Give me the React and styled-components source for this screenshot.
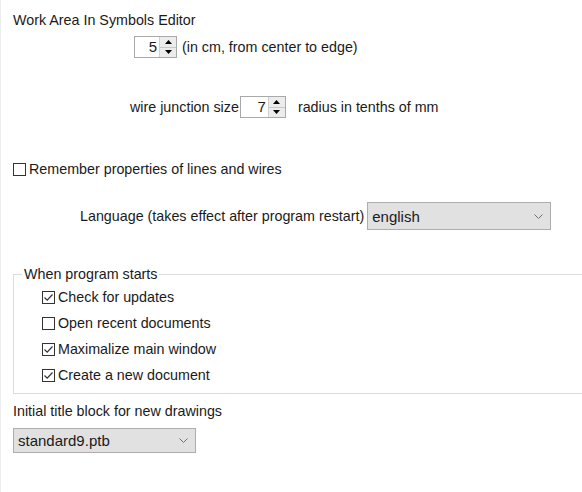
import styled, { createGlobalStyle } from "styled-components";

const GlobalStyle = createGlobalStyle`
    html, body {
        margin: 0;
        padding: 0;
        background: #ffffff;
    }
    body {
        font-family: "Liberation Sans", Arial, sans-serif;
        font-size: 14.3px;
        color: #000000;
    }
`;

/*Icons ------------*/
const CheckMark = () => (
    <svg width="11" height="11" viewBox="0 0 11 11">
        <path d="M1.5 5.5 L4.2 8.2 L9.5 2.5" fill="none" stroke="#333" strokeWidth="1.2" />
    </svg>
);

const Chevron = () => (
    <svg width="9" height="5" viewBox="0 0 9 5">
        <path d="M0.5 0.5 L4.5 4.5 L8.5 0.5" fill="none" stroke="#707070" strokeWidth="1" />
    </svg>
);

const Arrow = ({ down }) => (
    <svg width="7" height="4" viewBox="0 0 7 4">
        <path d={down ? "M0 0 L7 0 L3.5 4 Z" : "M0 4 L7 4 L3.5 0 Z"} fill="#000" />
    </svg>
);

/*Components ------------*/
const Spinner = ({ value, width }) => (
    <SpinBox $width={width}>
        <SpinValue>{value}</SpinValue>
        <SpinButtons>
            <SpinButton><Arrow /></SpinButton>
            <SpinButton $bottom><Arrow down /></SpinButton>
        </SpinButtons>
    </SpinBox>
);

const Check = ({ checked, children }) => (
    <CheckRow>
        <CheckBox>{checked && <CheckMark />}</CheckBox>
        <span>{children}</span>
    </CheckRow>
);

const App = () => {
    return (
        <>
            <GlobalStyle />
            <Page>
                <Heading>Work Area In Symbols Editor</Heading>
                <InlineRow $indent={134} $top={7}>
                    <Spinner value="5" width={43} />
                    <Label $gap={5}>(in cm, from center to edge)</Label>
                </InlineRow>
                <InlineRow $indent={130} $top={38}>
                    <Label>wire junction size</Label>
                    <Spacer $w={1} />
                    <Spinner value="7" width={46} />
                    <Label $gap={12}>radius in tenths of mm</Label>
                </InlineRow>
                <TopCheck>
                    <Check>Remember properties of lines and wires</Check>
                </TopCheck>
                <InlineRow $indent={80} $top={20}>
                    <Label>Language (takes effect after program restart)</Label>
                    <Select $width={184} $height={28} $gap={3}>
                        <span>english</span>
                        <Chevron />
                    </Select>
                </InlineRow>
                <Group>
                    <Legend>When program starts</Legend>
                    <Check checked>Check for updates</Check>
                    <Check>Open recent documents</Check>
                    <Check checked>Maximalize main window</Check>
                    <Check checked>Create a new document</Check>
                </Group>
                <BlockLabel>Initial title block for new drawings</BlockLabel>
                <Select $width={183} $height={25}>
                    <span>standard9.ptb</span>
                    <Chevron />
                </Select>
            </Page>
        </>
    );
};

export default App;

const Page = styled.div`
    width: 582px;
    height: 492px;
    box-sizing: border-box;
    padding: 12px 0 0 12px;
    border-left: 1px solid #ededed;
    overflow: hidden;
    color: #1a1a1a;
`;

const Heading = styled.div`
    line-height: 17px;
    height: 17px;
`;

const InlineRow = styled.div`
    display: flex;
    align-items: center;
    margin-left: ${(p) => p.$indent - 13}px;
    margin-top: ${(p) => p.$top}px;
`;

const Label = styled.span`
    margin-left: ${(p) => p.$gap || 0}px;
    white-space: nowrap;
`;

const Spacer = styled.span`
    width: ${(p) => p.$w}px;
`;

const SpinBox = styled.div`
    display: flex;
    width: ${(p) => p.$width}px;
    height: 22px;
    box-sizing: border-box;
    border: 1px solid #a9a9a9;
    background: #ffffff;
`;

const SpinValue = styled.div`
    flex: 1;
    text-align: right;
    padding-right: 2px;
    font-size: 15px;
    line-height: 20px;
`;

const SpinButtons = styled.div`
    width: 16px;
    display: flex;
    flex-direction: column;
    border-left: 1px solid #d0d0d0;
`;

const SpinButton = styled.div`
    flex: 1;
    display: flex;
    align-items: center;
    justify-content: center;
    background: #ececec;
    border-top: ${(p) => (p.$bottom ? "1px solid #c8c8c8" : "none")};
`;

const TopCheck = styled.div`
    margin-top: 38px;
`;

const CheckRow = styled.div`
    display: flex;
    align-items: center;
    gap: 3px;
    height: 26px;
    white-space: nowrap;
`;

const CheckBox = styled.span`
    width: 13px;
    height: 13px;
    box-sizing: border-box;
    border: 1px solid #333333;
    background: #ffffff;
    display: flex;
    align-items: center;
    justify-content: center;
`;

const Select = styled.div`
    display: flex;
    align-items: center;
    justify-content: space-between;
    width: ${(p) => p.$width}px;
    height: ${(p) => p.$height}px;
    margin-left: ${(p) => p.$gap || 0}px;
    box-sizing: border-box;
    padding: 0 7px 0 4px;
    background: #e1e1e1;
    border: 1px solid #adadad;
    font-size: 15px;
`;

const Group = styled.fieldset`
    margin: 36px 0 0 0;
    padding: 2px 0 5px 28px;
    width: 600px;
    border: 1px solid #dcdcdc;
    box-sizing: border-box;
`;

const Legend = styled.legend`
    padding: 0 2px;
    margin-left: -20px;
`;

const BlockLabel = styled.div`
    margin-top: 9px;
    margin-bottom: 9px;
`;
